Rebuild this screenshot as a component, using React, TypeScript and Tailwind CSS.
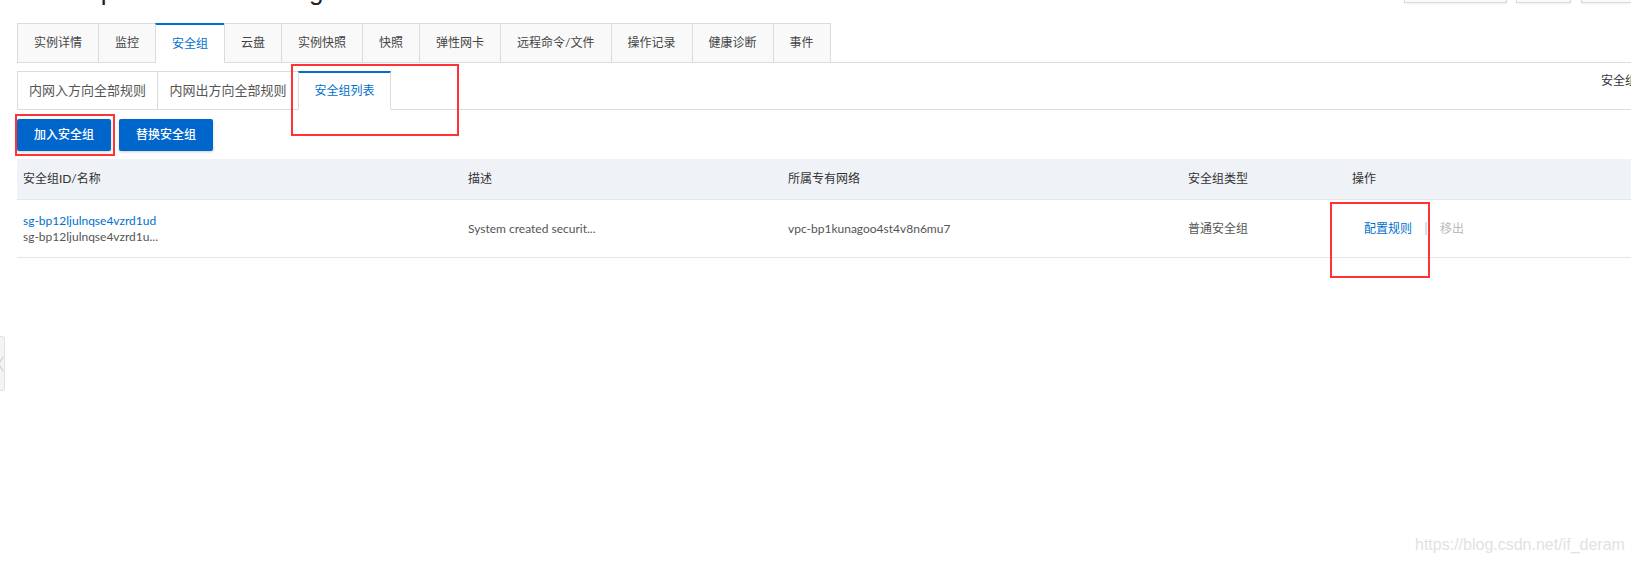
import React from "react";

const MAIN_TABS = [
  "实例详情",
  "监控",
  "安全组",
  "云盘",
  "实例快照",
  "快照",
  "弹性网卡",
  "远程命令/文件",
  "操作记录",
  "健康诊断",
  "事件",
];

const SUB_TABS = [
  { label: "内网入方向全部规则", w: "w-[140px]", active: false },
  { label: "内网出方向全部规则", w: "w-[141px]", active: false },
  { label: "安全组列表", w: "w-[93px]", active: true },
];

const FONT = { fontFamily: 'Lato, "Noto Sans CJK SC", "Noto Sans", sans-serif' };

function RedBox({ className }: { className: string }) {
  return <div className={`absolute border-2 border-[#f33] pointer-events-none ${className}`} />;
}

export default function App() {
  return (
    <div className="relative w-[1631px] h-[564px] overflow-hidden bg-white text-[12px] text-[#333]" style={FONT}>
      {/* page title, scrolled almost out of view */}
      <div className="flex h-[23px] items-start justify-between overflow-hidden">
        <div
          className="pl-[17px] -mt-[22px] text-[26px] leading-[26px] text-[#222] whitespace-nowrap"
          style={{ fontFamily: '"Liberation Sans", Arial, sans-serif' }}
        >
          Server production-host01g
        </div>
        <div className="flex gap-[9px] -mt-[27px] -mr-[20px]">
          <div className="w-[103px] h-[30px] border border-[#d9d9d9] bg-[#fafafa] shadow-[0_1px_2px_rgba(0,0,0,0.06)]" />
          <div className="w-[55px] h-[30px] border border-[#d9d9d9] bg-[#fafafa] shadow-[0_1px_2px_rgba(0,0,0,0.06)]" />
          <div className="w-[70px] h-[30px] ml-px border border-[#d9d9d9] bg-[#fafafa] shadow-[0_1px_2px_rgba(0,0,0,0.06)]" />
        </div>
      </div>

      {/* main tabs */}
      <div className="ml-[17px] flex h-[40px] border-b border-[#dcdcdc]">
        {MAIN_TABS.map((t, i) => {
          const active = t === "安全组";
          return (
            <div
              key={t}
              className={`-mb-px flex h-[40px] items-center px-4 border-l whitespace-nowrap ${
                i === MAIN_TABS.length - 1 ? "border-r" : ""
              } ${
                active
                  ? "border-t-2 border-t-[#0070cc] border-l-[#dcdcdc] border-r-[#dcdcdc] bg-white text-[#0070cc] pb-px"
                  : "border-t border-[#dcdcdc] border-b bg-[#f9f9f9] text-[#444]"
              }`}
            >
              {t}
            </div>
          );
        })}
      </div>

      {/* sub tabs */}
      <div className="ml-[17px] mt-[8px] flex h-[39px] border-b border-[#dcdcdc]">
        {SUB_TABS.map((t, i) => (
          <div
            key={t.label}
            className={`-mb-px flex h-[39px] items-center justify-center border-l border-[#dcdcdc] bg-white whitespace-nowrap ${t.w} ${
              i === SUB_TABS.length - 1 ? "border-r" : ""
            } ${
              t.active
                ? "border-t-2 border-t-[#0070cc] border-b border-b-white text-[12px] text-[#0070cc]"
                : "border-t border-b text-[13px] text-[#555]"
            }`}
          >
            {t.label}
          </div>
        ))}
        <div className="flex flex-1 justify-end pt-[1px]">
          <span className="w-[30px] overflow-hidden whitespace-nowrap leading-[18px] text-[#333]">安全组规则</span>
        </div>
      </div>

      {/* actions */}
      <div className="ml-[17px] mt-[9px] flex gap-[8px]">
        <button className="h-[32px] w-[94px] rounded-[2px] bg-[#0066cc] text-white font-medium shadow-[0_1px_3px_rgba(0,0,0,0.2)]">
          加入安全组
        </button>
        <button className="h-[32px] w-[94px] rounded-[2px] bg-[#0066cc] text-white font-medium shadow-[0_1px_3px_rgba(0,0,0,0.2)]">
          替换安全组
        </button>
      </div>

      {/* table */}
      <div className="ml-[17px] mt-[8px]">
        <div className="flex h-[41px] items-center border-b border-[#e3e6ea] bg-[#eff2f6] text-[#333]">
          <div className="w-[445px] px-[6px]">安全组ID/名称</div>
          <div className="w-[320px] px-[6px]">描述</div>
          <div className="w-[400px] px-[6px]">所属专有网络</div>
          <div className="w-[164px] px-[6px]">安全组类型</div>
          <div className="flex-1 px-[6px]">操作</div>
        </div>
        <div className="flex h-[58px] items-center border-b border-[#e5e5e5] text-[#555]">
          <div className="w-[445px] px-[6px] leading-[16px]">
            <div className="text-[#0070cc]">sg-bp12ljulnqse4vzrd1ud</div>
            <div>sg-bp12ljulnqse4vzrd1u...</div>
          </div>
          <div className="w-[320px] px-[6px]">System created securit...</div>
          <div className="w-[400px] px-[6px]">vpc-bp1kunagoo4st4v8n6mu7</div>
          <div className="w-[164px] px-[6px]">普通安全组</div>
          <div className="flex flex-1 items-center pl-[18px]">
            <span className="text-[#0070cc]">配置规则</span>
            <span className="mx-[13px] h-[13px] w-[2px] bg-[#dedede]" />
            <span className="text-[#bbb]">移出</span>
          </div>
        </div>
      </div>

      {/* collapsed side handle */}
      <div className="absolute left-0 top-[336px] flex h-[55px] w-[5px] items-center overflow-hidden rounded-r-[3px] border border-l-0 border-[#e2e2e2] bg-[#f3f3f3]">
        <svg width="5" height="20" viewBox="0 0 5 20" fill="none">
          <path d="M4 1 L-1 9 M-1 11 L4 19" stroke="#bdbdbd" strokeWidth="1" />
        </svg>
      </div>

      {/* annotations */}
      <RedBox className="left-[291px] top-[64px] w-[168px] h-[72px]" />
      <RedBox className="left-[15px] top-[114px] w-[100px] h-[42px]" />
      <RedBox className="left-[1330px] top-[202px] w-[100px] h-[76px]" />

      {/* watermark */}
      <div
        className="absolute left-[1415px] top-[535px] text-[16px] leading-[20px] text-[#e2e2e2] whitespace-nowrap"
        style={{ fontFamily: '"Liberation Sans", Arial, sans-serif' }}
      >
        https://blog.csdn.net/if_deram
      </div>
    </div>
  );
}
